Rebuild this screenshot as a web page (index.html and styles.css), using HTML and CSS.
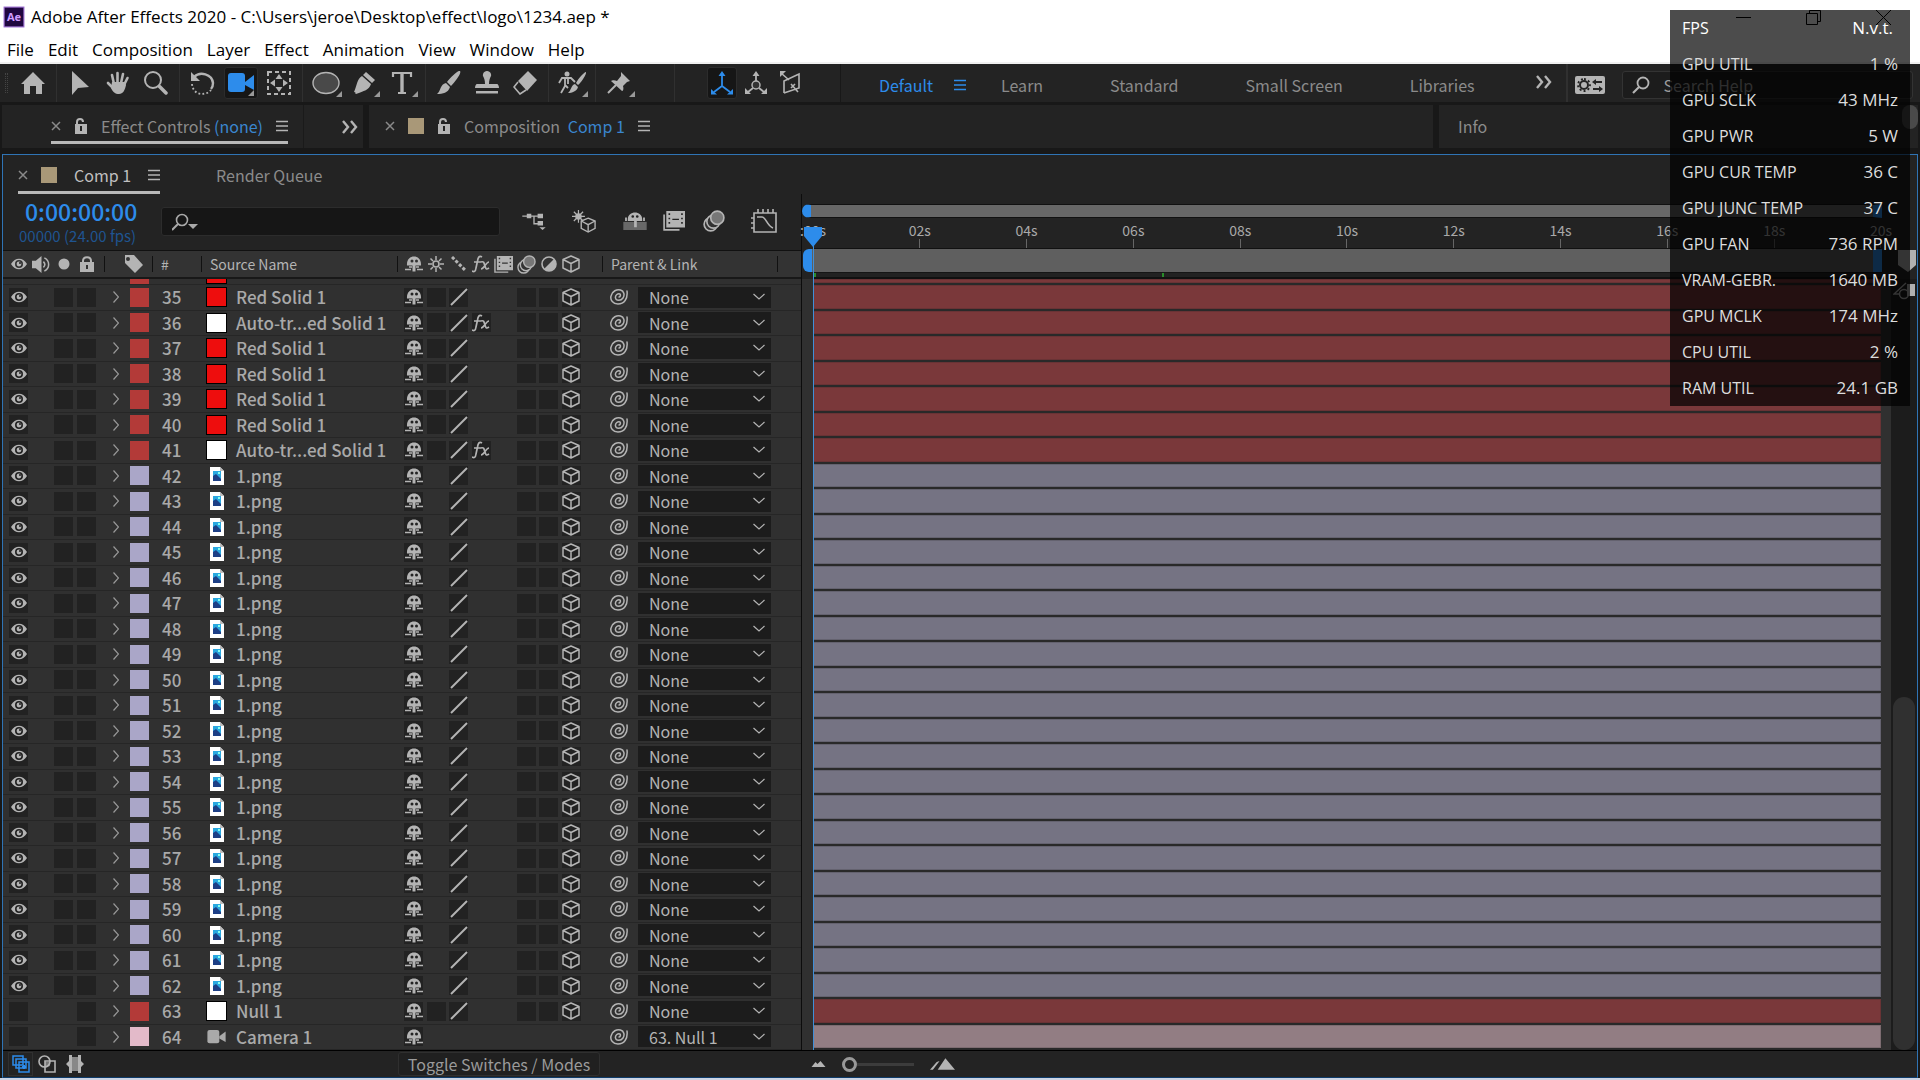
FILE: index.html
```html
<!DOCTYPE html>
<html lang="en">
<head>
<meta charset="utf-8">
<title>Adobe After Effects 2020</title>
<link rel="stylesheet" href="styles.css">
</head>
<body>
<svg class="sprite" aria-hidden="true">
  <symbol id="home" viewBox="0 0 24 24"><path fill="currentColor" d="M12 1 0 13h3v10h6v-8h6v8h6V13h3z"/></symbol>
  <symbol id="arrow" viewBox="0 0 24 24"><path fill="currentColor" d="M4 0v24l6-7 11-1z"/></symbol>
  <symbol id="hand" viewBox="0 0 24 24"><path fill="none" stroke="currentColor" stroke-width="2.6" stroke-linecap="round" d="M8 13 6 4M11.500 12V2M15 12l2-9M18 14l3.500-7M7 17l-5-5"/><path fill="currentColor" d="M6 11h13l1 3c-1 5-3 9-7 9-4 0-6-2-8-6z"/></symbol>
  <symbol id="zoom" viewBox="0 0 24 24"><path fill="none" stroke="currentColor" stroke-width="2" d="M17 9A8 8 0 1 1 1 9a8 8 0 0 1 16 0z"/><path stroke="currentColor" stroke-width="3.500" stroke-linecap="round" d="m15.500 15.500 6.500 6.500"/></symbol>
  <symbol id="rotate" viewBox="0 0 24 24"><path fill="none" stroke="currentColor" stroke-width="2.400" d="M3 6c6-6 18-3 19 6 0 3-1 5-2 6"/><path fill="currentColor" d="M0 1v9h9z"/><path fill="none" stroke="currentColor" stroke-width="1.800" stroke-dasharray="1.800 2.200" d="M1 13c1 12 14 12 19 6"/></symbol>
  <symbol id="camera" viewBox="0 0 26 20"><rect width="17" height="19" y="0" rx="3" fill="currentColor"/><path fill="currentColor" d="M17 9 26 2v15l-9-5z"/></symbol>
  <symbol id="pan" viewBox="0 0 24 24"><path fill="none" stroke="currentColor" stroke-width="2" stroke-dasharray="4 3" d="M1 1h22v22H1z"/><path fill="currentColor" d="m12 3 3.500 5h-7zM12 21l3.500-5h-7zM3 12l5-3.500v7zM21 12l-5-3.500v7z"/></symbol>
  <symbol id="ellipse" viewBox="0 0 28 24"><ellipse cx="14" cy="12" rx="13" ry="10.500" fill="#494949" stroke="currentColor" stroke-width="1.400"/></symbol>
  <symbol id="pen" viewBox="0 0 24 24"><path fill="currentColor" d="m14 1 9 8-3 3-9-8zM10 5l9 8c-2 6-7 7-15 10l-1-1 7-7a2 2 0 1 1 2 1l-6 6-4-1C5 14 5 8 10 5z"/></symbol>
  <symbol id="type" viewBox="0 0 24 24"><path fill="none" stroke="currentColor" stroke-width="2.200" d="M3 6V2h18v4M8 22h8"/><path fill="none" stroke="currentColor" stroke-width="3.400" d="M12 2v20"/></symbol>
  <symbol id="brush" viewBox="0 0 24 24"><path fill="currentColor" d="M23 0c2 2-5 11-9 15l-4-4C14 6 21-1 23 0zM9 12l4 4c-2 6-7 7-13 7 4-3 3-10 9-11z"/></symbol>
  <symbol id="stamp" viewBox="0 0 24 24"><path fill="currentColor" d="M12 0a4 4 0 0 1 4 5c-1 2-2 4-2 8h8c1 0 2 2 2 4H0c0-2 1-4 2-4h8c0-4-1-6-2-8a4 4 0 0 1 4-5zM1 20h22v2.500H1z"/></symbol>
  <symbol id="eraser" viewBox="0 0 24 24"><path fill="currentColor" d="M15 0 24 9 14 20 5 10z"/><path fill="none" stroke="currentColor" stroke-width="1.600" d="m5 11-4 5 6 7 6-4"/></symbol>
  <symbol id="roto" viewBox="0 0 28 24"><circle cx="9" cy="3" r="2.500" fill="currentColor"/><path fill="none" stroke="currentColor" stroke-width="1.800" d="M1 12l3-5h9l4 4M7 7v8l-4 7M7 14l3 3M10 7v6"/><path fill="currentColor" d="M28 1c1 1-4 10-8 13l-2-2C20 8 26 1 28 1zM17 13l3 3c-1 4-6 6-10 6 3-2 3-8 7-9z"/></symbol>
  <symbol id="pin" viewBox="0 0 24 24"><path fill="currentColor" d="m14 1 9 9-3 1-4 4c1 3 0 5-1 5L4 10c1-1 4-1 6 0l4-5z"/><path stroke="currentColor" stroke-width="2" d="m9 14-8 8"/></symbol>
  <symbol id="axis" viewBox="0 0 24 24"><path fill="none" stroke="currentColor" stroke-width="1.800" d="M12 4v11L4 21M12 15l8 6"/><path fill="currentColor" d="m12 0 3.500 5h-7zM1 18v5.500h6zM23 18v5.500h-6z"/></symbol>
  <symbol id="axisball" viewBox="0 0 24 24"><path fill="none" stroke="currentColor" stroke-width="1.800" d="M12 4v8M9 17l-5 4M15 17l5 4"/><path fill="currentColor" d="m12 0 3.500 5h-7zM1 17v6h6zM23 17v6h-6z"/><circle cx="12" cy="14" r="4" fill="#333" stroke="currentColor" stroke-width="1.500"/></symbol>
  <symbol id="axisview" viewBox="0 0 24 24"><path fill="none" stroke="currentColor" stroke-width="1.600" d="M6 22V10L21 3v14L6 22M3 2l8 7M13 13l7 8M13 17l4-4"/><path fill="currentColor" d="M2 0h6L2 6z"/></symbol>
  <symbol id="menu" viewBox="0 0 12 12"><path stroke="currentColor" stroke-width="1.500" d="M0 1.500h12M0 6h12M0 10.500h12"/></symbol>
  <symbol id="more" viewBox="0 0 16 14"><path fill="none" stroke="currentColor" stroke-width="2.400" d="m1 1 5 6-5 6M9 1l5 6-5 6"/></symbol>
  <symbol id="close" viewBox="0 0 10 10"><path stroke="currentColor" stroke-width="1.500" d="m1 1 8 8M9 1 1 9"/></symbol>
  <symbol id="unlock" viewBox="0 0 14 16"><path fill="none" stroke="currentColor" stroke-width="2" d="M3 7V4c0-4 6-4 6 0"/><path fill="currentColor" fill-rule="evenodd" d="M1 6h12v10H1zM6 8v5h2V8z"/></symbol>
  <symbol id="lock" viewBox="0 0 14 16"><path fill="none" stroke="currentColor" stroke-width="2" d="M3 7V5c0-5 8-5 8 0v2"/><path fill="currentColor" fill-rule="evenodd" d="M0 6h14v10H0zM6 9v4h2V9z"/></symbol>
  <symbol id="find" viewBox="0 0 18 18"><circle cx="11" cy="7" r="5.500" fill="none" stroke="currentColor" stroke-width="1.800"/><path stroke="currentColor" stroke-width="2.200" d="m7 11-6 6"/></symbol>
  <symbol id="findmenu" viewBox="0 0 26 18"><circle cx="10" cy="7" r="5.500" fill="none" stroke="currentColor" stroke-width="1.600"/><path stroke="currentColor" stroke-width="2" d="m6 11-6 6"/><path fill="currentColor" d="M16 11h10l-5 5z"/></symbol>
  <symbol id="sync" viewBox="0 0 30 18"><rect width="30" height="18" rx="2" fill="#b4b4b4"/><circle cx="9" cy="9" r="4" fill="none" stroke="#232323" stroke-width="2"/><path stroke="#232323" stroke-width="1.800" stroke-dasharray="2 2.200" fill="none" d="M9 3a6 6 0 1 1 0 12A6 6 0 0 1 9 3"/><path stroke="#232323" stroke-width="2" d="M20 6h7M18 13h7"/><path fill="#232323" d="m17 6 4-3v6zM28 13l-4-3v6z"/></symbol>
  <symbol id="eye" viewBox="0 0 18 12"><path fill="currentColor" fill-rule="evenodd" d="M1 6c4-7 12-7 16 0-4 7-12 7-16 0zm4 0a4 4 0 1 0 8 0 4 4 0 0 0-8 0z"/><circle cx="9" cy="6" r="2.400" fill="currentColor"/><circle cx="10" cy="5" r="1" fill="#222"/></symbol>
  <symbol id="speaker" viewBox="0 0 20 18"><path fill="currentColor" d="M0 5h4l6-5v18l-6-5H0z"/><path fill="none" stroke="currentColor" stroke-width="1.600" d="M12 6c2 2 2 4 0 6M13 2c6 3 6 11 0 14"/></symbol>
  <symbol id="dot" viewBox="0 0 12 12"><circle cx="6" cy="6" r="5.500" fill="currentColor"/></symbol>
  <symbol id="tag" viewBox="0 0 18 18"><path fill="currentColor" fill-rule="evenodd" d="M0 0h9l9 10-8 8L0 8zm3 2a2 2 0 1 0 2 2 2 2 0 0 0-2-2z"/></symbol>
  <symbol id="shy" viewBox="0 0 18 15"><path fill="currentColor" fill-rule="evenodd" d="M2 9C1-3 17-3 16 9h-5.500v6h-3V9zm3.500-4.500a1.500 1.500 0 1 0 3 0 1.500 1.500 0 0 0-3 0zm4.500 0a1.500 1.500 0 1 0 3 0 1.500 1.500 0 0 0-3 0z"/><path stroke="currentColor" stroke-width="1.600" d="M4 10.500h3M11 10.500h3M0 13h6M12 13h6"/></symbol>
  <symbol id="sun" viewBox="0 0 16 16"><circle cx="8" cy="8" r="3" fill="none" stroke="currentColor" stroke-width="1.600"/><path stroke="currentColor" stroke-width="1.500" d="M8 0v4M8 12v4M0 8h4M12 8h4M2.500 2.500l2.500 2.500M11 11l2.500 2.500M13.500 2.500 11 5M5 11l-2.500 2.500"/></symbol>
  <symbol id="steps" viewBox="0 0 16 16"><path stroke="currentColor" stroke-width="3" stroke-dasharray="3.200 1.800" d="m1 1 14 14"/></symbol>
  <symbol id="slash" viewBox="0 0 18 18"><path stroke="currentColor" stroke-width="2" d="M1 17 17 1"/></symbol>
  <symbol id="film" viewBox="0 0 20 18"><path fill="none" stroke="currentColor" stroke-width="1.500" d="M1 3v14h14"/><path fill="currentColor" fill-rule="evenodd" d="M3 0h17v15H3zm2 2v1.500h1.500V2zm0 4v1.500h1.500V6zm0 4v1.500h1.500V10zM16.500 2v1.500H18V2zm0 4v1.500H18V6zm0 4v1.500H18V10zM8.500 7v1.200h6V7z"/></symbol>
  <symbol id="blur" viewBox="0 0 20 20"><g fill="#333" stroke="currentColor" stroke-width="1.500"><circle cx="7" cy="13" r="6"/><circle cx="9.500" cy="10.500" r="6"/><circle cx="13" cy="7" r="6" fill="#777"/></g></symbol>
  <symbol id="half" viewBox="0 0 16 16"><circle cx="8" cy="8" r="7" fill="none" stroke="currentColor" stroke-width="1.600"/><path fill="currentColor" d="M13 3a7 7 0 0 1-10 10z"/></symbol>
  <symbol id="cube" viewBox="0 0 18 18"><path fill="none" stroke="currentColor" stroke-width="1.500" stroke-linejoin="round" d="m9 1 8 3.500v8.500l-8 4-8-4V4.500zM1 4.500l8 4 8-4M9 8.500V17"/></symbol>
  <symbol id="fx" viewBox="0 0 18 18"><path fill="none" stroke="currentColor" stroke-width="1.700" d="M10 2C7 0 6 3 5.500 6L4 13c-.5 4-2 4-4 3M2 7h7M9 7c3-1 3 1 4 4 1 3 1 4 4 2M17 7c-3 0-5 7-8 7"/></symbol>
  <symbol id="spiral" viewBox="0 0 18 18"><path fill="none" stroke="currentColor" stroke-width="1.500" stroke-linecap="round" d="M17 3c1 8-3 13-9 13C3 16 0 12 1 8c1-5 6-7 9.500-6C14 3 15 7 13 10c-2 3-7 3-7.500 0C5 7 8 5 10 6c1 1 0 3-1 3"/></symbol>
  <symbol id="right" viewBox="0 0 6 12"><path fill="none" stroke="currentColor" stroke-width="1.200" d="m.5.5 5 5.500-5 5.500"/></symbol>
  <symbol id="down" viewBox="0 0 12 8"><path fill="none" stroke="currentColor" stroke-width="1.200" d="m.5 1 5.500 5 5.500-5"/></symbol>
  <symbol id="image" viewBox="0 0 14 18"><path fill="#fff" d="M0 0h10l4 4v14H0z"/><path fill="#bbb" d="M10 0v4h4z"/><path fill="#29a8e0" d="M3 4h8v10H3z"/><path fill="#1d3f86" d="m3 9 3-2 5 5v2H3z"/><path fill="#8fe" d="M8 5h2v2H8z"/></symbol>
  <symbol id="flow" viewBox="0 0 26 20"><path fill="currentColor" d="M5 2h5v5H5zM17 2h6v5h-6zM17 10h6v5h-6zM19 17h7l-3.500 3z"/><path fill="none" stroke="currentColor" stroke-width="1.500" d="M0 4.500h18M13 4v9h5"/></symbol>
  <symbol id="draft" viewBox="0 0 26 26"><circle cx="7" cy="8" r="3.500" fill="currentColor"/><path stroke="currentColor" stroke-width="1.300" d="M7 1v14M0 8h14M2 3l10 10M12 3 2 13"/><path fill="#232323" stroke="currentColor" stroke-width="1.500" d="m17.500 10 7.500 3v8l-7.500 4-7.500-4v-8z"/><path fill="none" stroke="currentColor" stroke-width="1.500" d="m10 13 7.500 4 7.500-4M17.500 17v8"/></symbol>
  <symbol id="hide" viewBox="0 0 26 20"><path fill="#686868" d="M0 11h26v9H0z"/><path fill="currentColor" fill-rule="evenodd" d="M5 8c0-10 16-10 16 0v2h-6v7h-3v-7H5zm4-3a1.500 1.500 0 1 0 3 0 1.500 1.500 0 0 0-3 0zm5 0a1.500 1.500 0 1 0 3 0 1.500 1.500 0 0 0-3 0zM2 6h2v4H2zM22 6h2v4h-2z"/></symbol>
  <symbol id="graph" viewBox="0 0 26 24"><path fill="none" stroke="currentColor" stroke-width="1.600" d="M3 4h22v19H3zM7 0v4M12 0v4M17 0v4M22 0v4M0 9h3M0 14h3M0 19h3M6 8h5c4 0 5 9 11 11"/></symbol>
  <symbol id="layersicon" viewBox="0 0 18 18"><path fill="#232323" stroke="currentColor" stroke-width="1.500" d="M1 1h10v9H1zM4 4h10v9H4zM7 7h10v10H7z"/><path fill="currentColor" d="M11 10h2v4h-2zM10 11h4v2h-4z"/></symbol>
  <symbol id="modes" viewBox="0 0 18 18"><path fill="#777" d="M7 7h5v4l-3 1H7z"/><path fill="none" stroke="currentColor" stroke-width="1.600" d="M7 6h10v11H7z"/><circle cx="6.500" cy="6.500" r="5.500" fill="none" stroke="currentColor" stroke-width="1.600"/></symbol>
  <symbol id="braces" viewBox="0 0 18 18"><path fill="#888" d="M4 2h10v14H4z"/><path fill="currentColor" d="M6 0v18H3v-6L0 9l3-3V0zM12 0v18h3v-6l3-3-3-3V0z"/></symbol>
  <symbol id="hills" viewBox="0 0 14 6"><path fill="currentColor" d="m0 6 4-5 2 2 3-3 5 6z"/></symbol>
  <symbol id="peaks" viewBox="0 0 26 12"><path fill="currentColor" d="m8 12 8-12 10 12zM0 12l7-8 3-1-7 9z"/></symbol>
  <symbol id="marker" viewBox="0 0 18 22"><path fill="#b0b0b0" d="M0 0h18v15l-8 7L0 15z"/></symbol>
  <symbol id="bin" viewBox="0 0 22 18"><path fill="#b0b0b0" d="M14 2h8v12h-8z"/><path fill="none" stroke="#b0b0b0" stroke-width="1.500" d="M13 1 1 12h6"/><circle cx="11" cy="12" r="4.500" fill="none" stroke="#b0b0b0" stroke-width="1.500"/></symbol>
</svg>

<header class="titlebar">
  <svg class="logo" viewBox="0 0 20 20" aria-hidden="true"><rect x="1" y="1" width="18" height="18" fill="#1f0740" stroke="#9a6bd0"/><text x="10" y="14" text-anchor="middle" class="logo-text">Ae</text></svg>
  <h1 class="title">Adobe After Effects 2020 - C:\Users\jeroe\Desktop\effect\logo\1234.aep *</h1>
  <div class="window-controls">
    <button aria-label="Minimize"><svg width="15" height="15" viewBox="0 0 15 15"><path stroke="#000" d="M0 7.500h15"/></svg></button>
    <button aria-label="Restore"><svg width="15" height="15" viewBox="0 0 15 15"><path fill="none" stroke="#000" d="M.5 3.500h11v11H.5zM3.500 3V.5h11v11H12"/></svg></button>
    <button aria-label="Close"><svg width="15" height="15" viewBox="0 0 15 15"><path stroke="#000" d="m0 0 15 15M15 0 0 15"/></svg></button>
  </div>
</header>

<nav class="menubar">
  <button>File</button><button>Edit</button><button>Composition</button><button>Layer</button><button>Effect</button><button>Animation</button><button>View</button><button>Window</button><button>Help</button>
</nav>

<div class="toolbar">
  <div class="grip"></div>
  <div class="tools"><button aria-label="Home"><svg class="i24"><use href="#home"/></svg></button></div>
  <div class="tools"><button aria-label="Selection"><svg class="i24"><use href="#arrow"/></svg></button><button aria-label="Hand"><svg class="i24"><use href="#hand"/></svg></button><button aria-label="Zoom"><svg class="i24"><use href="#zoom"/></svg></button></div>
  <div class="tools"><button aria-label="Rotate"><svg class="i24"><use href="#rotate"/></svg></button><button class="active flyout" aria-label="Camera"><svg class="i26"><use href="#camera"/></svg></button><button aria-label="Pan behind"><svg class="i24"><use href="#pan"/></svg></button></div>
  <div class="tools"><button class="flyout" aria-label="Ellipse"><svg class="i28"><use href="#ellipse"/></svg></button><button class="flyout" aria-label="Pen"><svg class="i24"><use href="#pen"/></svg></button><button class="flyout" aria-label="Type"><svg class="i24"><use href="#type"/></svg></button></div>
  <div class="tools"><button aria-label="Brush"><svg class="i24"><use href="#brush"/></svg></button><button aria-label="Clone stamp"><svg class="i24"><use href="#stamp"/></svg></button><button aria-label="Eraser"><svg class="i24"><use href="#eraser"/></svg></button></div>
  <div class="tools"><button class="flyout" aria-label="Roto brush"><svg class="i28"><use href="#roto"/></svg></button></div>
  <div class="tools pins"><button class="flyout" aria-label="Puppet pin"><svg class="i24"><use href="#pin"/></svg></button></div>
  <div class="tools axes"><button class="active" aria-label="Local axis"><svg class="i24"><use href="#axis"/></svg></button><button aria-label="World axis"><svg class="i24"><use href="#axisball"/></svg></button><button aria-label="View axis"><svg class="i24"><use href="#axisview"/></svg></button></div>
  <nav class="workspaces">
    <a class="current" href="#">Default <svg class="i12"><use href="#menu"/></svg></a><a href="#">Learn</a><a href="#">Standard</a><a href="#">Small Screen</a><a href="#">Libraries</a>
    <button class="more" aria-label="More workspaces"><svg class="i16"><use href="#more"/></svg></button>
  </nav>
  <div class="help">
    <button aria-label="Sync settings"><svg class="i30"><use href="#sync"/></svg></button>
    <label class="help-search"><svg class="i18"><use href="#find"/></svg><input type="text" placeholder="Search Help" aria-label="Search Help"></label>
  </div>
</div>

<div class="docks">
  <section class="dock effects">
    <div class="tab underlined"><svg class="i10"><use href="#close"/></svg><svg class="lock16"><use href="#unlock"/></svg><span>Effect Controls <b>(none)</b></span><svg class="i12"><use href="#menu"/></svg></div>
    <button class="more" aria-label="More panels"><svg class="i16"><use href="#more"/></svg></button>
  </section>
  <section class="dock viewer">
    <div class="tab"><svg class="i10"><use href="#close"/></svg><i class="swatch"></i><svg class="lock16"><use href="#unlock"/></svg><span>Composition <b>Comp 1</b></span><svg class="i12"><use href="#menu"/></svg></div>
  </section>
  <section class="dock info"><div class="tab">Info</div><i class="mini-scroll"></i></section>
</div>

<main class="timeline">
  <div class="tabs">
    <div class="tab underlined current"><svg class="i10"><use href="#close"/></svg><i class="swatch"></i><span>Comp 1</span><svg class="i12"><use href="#menu"/></svg></div>
    <div class="tab">Render Queue</div>
  </div>

  <div class="panes">
    <section class="left">
      <div class="controls">
        <div class="time"><strong>0:00:00:00</strong><small>00000 (24.00 fps)</small></div>
        <label class="layer-search"><svg class="i26s"><use href="#findmenu"/></svg><input type="text" aria-label="Search layers"></label>
        <div class="switches">
          <button aria-label="Mini-flowchart"><svg class="i26s"><use href="#flow"/></svg></button>
          <button aria-label="Draft 3D"><svg class="i26"><use href="#draft"/></svg></button>
          <button aria-label="Hide shy layers"><svg class="i26s"><use href="#hide"/></svg></button>
          <button aria-label="Frame blending"><svg class="i22"><use href="#film"/></svg></button>
          <button aria-label="Motion blur"><svg class="i22"><use href="#blur"/></svg></button>
          <button aria-label="Graph editor"><svg class="i26"><use href="#graph"/></svg></button>
        </div>
      </div>
      <table class="layers">
        <thead>
          <tr>
            <th><svg class="i18e"><use href="#eye"/></svg></th>
            <th><svg class="i19"><use href="#speaker"/></svg></th>
            <th><svg class="i12"><use href="#dot"/></svg></th>
            <th><svg class="i16"><use href="#lock"/></svg></th>
            <th></th>
            <th class="ruled tags"><svg class="i18"><use href="#tag"/></svg></th>
            <th class="ruled">#</th>
            <th class="ruled source">Source Name</th>
            <th><svg class="i18"><use href="#shy"/></svg></th>
            <th><svg class="i16"><use href="#sun"/></svg></th>
            <th><svg class="i16"><use href="#steps"/></svg></th>
            <th><svg class="i18"><use href="#fx"/></svg></th>
            <th><svg class="i19"><use href="#film"/></svg></th>
            <th><svg class="i19"><use href="#blur"/></svg></th>
            <th><svg class="i16"><use href="#half"/></svg></th>
            <th><svg class="i18"><use href="#cube"/></svg></th>
            <th></th>
            <th class="ruled parent">Parent &amp; Link</th>
          </tr>
        </thead>
        <tbody id="layers"></tbody>
      </table>
    </section>

    <section class="right">
      <div class="scale">
        <div class="navigator"></div>
        <div class="ruler" id="ruler"></div>
        <div class="workarea"></div>
        <div class="cache"><i></i></div>
      </div>
      <div class="side-tools"><svg class="marker"><use href="#marker"/></svg><svg class="bin"><use href="#bin"/></svg></div>
      <div class="bars" id="bars"></div>
      <div class="scroll"><i></i></div>
      <div class="playhead"><svg width="18" height="20" viewBox="0 0 18 20"><path fill="#2d8ceb" d="M0 0h18v9l-9 11L0 9z"/></svg></div>
    </section>
  </div>

  <footer class="status">
    <button class="framed" aria-label="Layer switches"><svg class="i18"><use href="#layersicon"/></svg></button>
    <button aria-label="Transfer controls"><svg class="i18"><use href="#modes"/></svg></button>
    <button aria-label="In and out"><svg class="i18"><use href="#braces"/></svg></button>
    <button class="toggle">Toggle Switches / Modes</button>
    <div class="zoomer"><svg class="hills"><use href="#hills"/></svg><input type="range" min="0" max="100" value="0" aria-label="Timeline zoom"><svg class="peaks"><use href="#peaks"/></svg></div>
  </footer>
</main>

<aside class="monitor">
  <dl>
    <div class="first"><dt>FPS</dt><dd>N.v.t.</dd></div>
    <div><dt>GPU UTIL</dt><dd>1 %</dd></div>
    <div><dt>GPU SCLK</dt><dd>43 MHz</dd></div>
    <div><dt>GPU PWR</dt><dd>5 W</dd></div>
    <div><dt>GPU CUR TEMP</dt><dd>36 C</dd></div>
    <div><dt>GPU JUNC TEMP</dt><dd>37 C</dd></div>
    <div><dt>GPU FAN</dt><dd>736 RPM</dd></div>
    <div><dt>VRAM-GEBR.</dt><dd>1640 MB</dd></div>
    <div><dt>GPU MCLK</dt><dd>174 MHz</dd></div>
    <div><dt>CPU UTIL</dt><dd>2 %</dd></div>
    <div><dt>RAM UTIL</dt><dd>24.1 GB</dd></div>
  </dl>
</aside>
<script src="app.js"></script>
</body>
</html>
```

FILE: styles.css
```css
* { box-sizing: border-box; }

body {
  margin: 0;
  height: 100vh;
  min-height: 600px;
  display: flex;
  flex-direction: column;
  overflow: hidden;
  background: #181818;
  color: #a9a9a9;
  font: 16px/20px "Noto Sans CJK SC", "Noto Sans", sans-serif;
}
body::after { content: ""; flex: none; height: 2px; background: #ccd4e4; }

button {
  margin: 0;
  padding: 0;
  border: 0;
  background: none;
  color: inherit;
  font: inherit;
  display: flex;
  align-items: center;
  justify-content: center;
}

input, select { font: inherit; color: inherit; }
a { color: inherit; text-decoration: none; }
svg { display: block; flex: none; }
.sprite { position: absolute; width: 0; height: 0; }

.i10 { width: 10px; height: 10px; }
.i12 { width: 12px; height: 12px; }
.i16 { width: 16px; height: 16px; }
.i18 { width: 18px; height: 18px; }
.i18e { width: 18px; height: 12px; }
.i19 { width: 19px; height: 19px; }
.i22 { width: 22px; height: 22px; }
.i24 { width: 24px; height: 24px; }
.i26 { width: 26px; height: 24px; }
.i26s { width: 26px; height: 18px; }
.i28 { width: 28px; height: 24px; }
.i30 { width: 30px; height: 18px; }
.lock16 { width: 14px; height: 16px; }

/* Window frame */
.titlebar {
  height: 34px;
  flex: none;
  display: flex;
  align-items: center;
  padding-left: 3px;
  background: #fff;
  color: #000;
}
.logo { width: 22px; height: 22px; margin-right: 6px; }
.logo-text { font: bold 10px "Noto Sans", sans-serif; fill: #cf9cff; }
.title { margin: 0; font: 17px/24px "Open Sans", sans-serif; }
.window-controls {
  position: relative;
  z-index: 3;
  margin-left: auto;
  padding-right: 2px;
  display: flex;
}
.window-controls button { width: 70px; height: 32px; }

.menubar {
  height: 30px;
  flex: none;
  display: flex;
  align-items: center;
  gap: 14px;
  padding: 3px 0 0 7px;
  background: #fff;
  border-bottom: 2px solid #f0f0f0;
  color: #000;
  font: 17px/24px "Open Sans", sans-serif;
}

/* Tools */
.toolbar {
  height: 38px;
  flex: none;
  display: flex;
  background: #232323;
  color: #b4b4b4;
}
.grip { width: 3px; height: 20px; margin: 9px 2px 0 5px; border: dotted #444; border-width: 0 1px; }
.tools { display: flex; align-items: center; padding: 0 4px; border-right: 1px solid #303030; }
.tools button { position: relative; width: 38px; height: 32px; }
.tools .active {
  width: 34px;
  margin: 0 2px;
  background: #161616;
  border: 1px solid #2c2c2c;
  border-radius: 3px;
  color: #2d8ceb;
}
.flyout::after {
  content: "";
  position: absolute;
  right: 3px;
  bottom: 2px;
  border: 3px solid #999;
  border-top-color: transparent;
  border-left-color: transparent;
}
.pins { padding-right: 36px; }
.axes { padding: 0 33px 0 30px; border-color: #181818; }
.axes button { width: 34px; }
.axes .active { width: 30px; }
.workspaces {
  display: flex;
  align-items: center;
  gap: 67px;
  padding: 4px 14px 0 38px;
  border-right: 2px solid #303030;
  color: #8b8b8b;
}
.workspaces a { display: flex; align-items: center; white-space: nowrap; }
.workspaces .current { gap: 21px; margin-right: -32px; color: #2d8ceb; }
.more { color: #b4b4b4; }
.workspaces .more { margin: 0 0 6px -6px; }
.help { flex: 1; display: flex; align-items: center; gap: 17px; padding: 4px 7px 0; }
.help-search {
  flex: 1;
  height: 28px;
  display: flex;
  align-items: center;
  gap: 14px;
  padding-left: 9px;
  background: #1c1c1c;
  border: 1px solid #333;
  border-radius: 3px;
}
.help-search input, .layer-search input {
  flex: 1;
  min-width: 0;
  padding: 0;
  border: 0;
  outline: 0;
  background: none;
}
.help-search input::placeholder { color: #9b9b9b; opacity: 1; }

/* Upper docked panels */
.docks {
  flex: none;
  height: 52px;
  display: grid;
  grid-template-columns: 361px 1fr 479px;
  gap: 6px;
  padding: 3px 2px 6px;
}
.dock { display: flex; align-items: stretch; background: #232323; color: #8b8b8b; }
.tab { display: flex; align-items: center; white-space: nowrap; border-bottom: 3px solid transparent; }
.tab.underlined { border-color: #b8b8b8; }
.tab b { font-weight: 400; color: #3a86cf; }
.tab svg { color: #b4b4b4; }
.tab .i10 { color: #8a8a8a; }
.swatch { width: 16px; height: 16px; background: #a99878; }
.dock .tab { height: 39px; padding-top: 5px; }
.effects { justify-content: space-between; }
.effects .tab { margin-left: 49px; gap: 13px; }
.effects .more { width: 60px; padding-left: 32px; border-left: 1px solid #1a1a1a; }
.viewer .tab { margin-left: 16px; gap: 13px; }
.viewer b { margin-left: 4px; }
.info .tab { margin-left: 19px; }
.mini-scroll { width: 16px; height: 24px; margin-left: auto; border-radius: 8px; background: #4a4a4a; }

/* Timeline panel */
.timeline {
  flex: 1;
  min-height: 0;
  display: flex;
  flex-direction: column;
  margin: 0 2px;
  border: 1px solid #2f74b5;
  border-bottom-color: #0d3a68;
  background: #232323;
}
.tabs { flex: none; height: 39px; display: flex; gap: 56px; padding: 4px 15px 0; color: #8b8b8b; }
.tabs .current { color: #c0c0c0; gap: 17px; }
.tabs .current .i10 { margin-right: -4px; }
.panes { flex: 1; min-height: 0; display: grid; grid-template-columns: 799px 1fr; }
.left { min-height: 0; display: flex; flex-direction: column; border-right: 1px solid #0c0c0c; }
.controls { flex: none; height: 56px; display: flex; align-items: flex-start; padding: 6px 0 0 16px; }
.time { width: 142px; display: flex; flex-direction: column; gap: 4px; color: #2d8ceb; }
.time strong { padding-left: 6px; font-size: 23px; line-height: 22px; font-weight: 500; }
.time small { font-size: 15px; line-height: 20px; color: #1f5490; }
.layer-search {
  width: 339px;
  height: 29px;
  margin-top: 7px;
  display: flex;
  align-items: center;
  padding-left: 10px;
  background: #161616;
  border: 1px solid #2c2c2c;
  border-radius: 3px;
}
.switches { display: grid; grid-template-columns: 52px 48px 54px 24px 56px 44px; margin: 8px 0 0 8px; color: #b4b4b4; }
.switches button { height: 26px; }

.layers { flex: 1; min-height: 0; display: flex; flex-direction: column; overflow: hidden; }
.layers tr {
  display: grid;
  grid-template-columns: 23px 22px 23px 23px 23px 37px 42px 202px 23px 22px 23px 22px 23px 22px 23px 22px 56px 1fr;
  padding-left: 4px;
}
.layers thead tr {
  grid-template-columns: 23px 22px 23px 23px 6px 48px 49px 201px 23px 22px 23px 22px 23px 22px 23px 22px 20px 176px;
  height: 29px;
  background: #333;
  border-top: 1px solid #111;
  border-bottom: 2px solid #181818;
}
.layers th {
  padding: 0;
  display: flex;
  align-items: center;
  justify-content: center;
  font-weight: 400;
  font-size: 14px;
  color: #b4b4b4;
}
.layers th.ruled { justify-content: flex-start; }
.ruled::before, .source::after, .parent::after { content: ""; width: 1px; height: 16px; background: #111; }
.ruled::before { margin-right: 8px; }
.tags::before { margin-right: 20px; }
.source::after, .parent::after { margin-left: auto; }
.source::after { margin-right: 4px; }
.layers tbody { flex: 1; min-height: 0; display: flex; flex-direction: column; background: #303030; }
.layers tbody tr { flex: 1 1 0; min-height: 0; border-bottom: 1px solid #262626; overflow: hidden; }
.layers tbody tr.clipped { flex: 0 0 6px; align-items: end; }
.layers td { min-width: 0; min-height: 0; padding: 0; display: flex; align-items: center; justify-content: center; color: #b4b4b4; }
.cell { width: 19px; height: 19px; background: #222; overflow: hidden; }
.layers td.twirl { justify-content: flex-end; color: #999; }
.twirl svg { width: 6px; height: 12px; margin-right: 2px; }
.label { width: 19px; height: 19px; }
.label.red { background: #b33a38; }
.label.lavender { background: #aaa6c8; }
.label.pink { background: #e3bac9; }
.layers td.number, .layers td.name { justify-content: flex-start; font-size: 17px; font-weight: 500; color: #a9a9a9; }
.layers td.number { padding-left: 4px; }
.layers td.name { gap: 9px; padding-left: 6px; white-space: nowrap; }
.thumb { width: 21px; height: 20px; flex: none; display: flex; align-items: center; justify-content: center; }
.thumb svg { width: 14px; height: 18px; }
.thumb .cam { width: 19px; height: 14px; }
.thumb.solid { border: 1px solid #000; background: #ee0d0d; }
.thumb.white { border: 1px solid #000; background: #fff; }
.layers td.pick { padding-left: 18px; }
.layers td.link { justify-content: flex-start; }
.drop { display: grid; width: 133px; height: 21px; background: #1c1c1c; align-items: center; }
.drop select {
  grid-area: 1 / 1;
  width: 100%;
  height: 21px;
  padding: 0 0 0 11px;
  border: 0;
  appearance: none;
  background: none;
  line-height: 20px;
}
.drop svg { grid-area: 1 / 1; width: 12px; height: 8px; margin-left: 115px; pointer-events: none; }

/* Time graph */
.right {
  position: relative;
  min-height: 0;
  display: grid;
  grid-template-columns: 1fr 25px;
  grid-template-rows: 85px 1fr;
}
.scale { display: flex; flex-direction: column; padding: 10px 10px 0 0; min-width: 0; }
.navigator, .workarea { border: solid #2d8ceb; border-width: 0 9px; background: #676767; flex: none; }
.navigator { height: 14px; border-radius: 7px 0 0 7px; border-top: 1px solid #111; border-bottom: 1px solid #111; }
.ruler { flex: none; height: 31px; display: flex; justify-content: space-between; margin: 0 1px 0 11px; padding-top: 3px; border-bottom: 1px solid #111; }
.tick { width: 0; display: flex; flex-direction: column; align-items: center; justify-content: space-between; font-size: 14px; line-height: 18px; white-space: nowrap; }
.tick::after { content: ""; width: 1px; height: 9px; background: #666; }
.workarea { height: 23px; background: #5f5f5f; border-radius: 6px 0 0 6px; margin-left: 1px; }
.cache { height: 7px; background: #222; margin-left: 11px; border-top: 1px solid #161616; border-bottom: 2px solid #111; display: flex; }
.cache::before, .cache i { content: ""; width: 3px; height: 4px; background: #2a8c2a; }
.cache i { width: 2px; margin-left: 346px; }
.side-tools { padding: 56px 0 0 1px; display: flex; flex-direction: column; gap: 10px; z-index: 1; height: 108px; }
.marker { width: 18px; height: 22px; margin-left: 5px; }
.bin { width: 22px; height: 18px; }
.bars { min-height: 0; display: flex; flex-direction: column; padding: 0 10px 0 11px; background: #303030; border-right: 1px solid #1c1c1c; }
.bar { flex: 1 1 0; min-height: 0; border: solid #292929; border-width: 0 0 2px; }
.bar.clipped { flex: 0 0 6px; }
.bar i { display: block; height: 100%; border: 1px solid; border-width: 1px 1px 1px 0; }
.bar .red { background: #7a383a; border-color: #693335; }
.bar .lavender { background: #757383; border-color: #64626f; }
.bar .pink { background: #927d83; border-color: #7d6c71; }
.scroll { background: #1c1c1c; padding: 418px 2px 0 1px; min-height: 0; display: flex; }
.scroll i { flex: 1; border-radius: 11px; background: #303030; }
.playhead {
  position: absolute;
  left: 2px;
  top: 33px;
  bottom: 0;
  width: 18px;
  background: linear-gradient(#3f8fd8, #3f8fd8) 9px 0 / 1px 100% no-repeat;
}

/* Panel footer */
.status { flex: none; height: 27px; display: flex; align-items: center; border-top: 1px solid #000; padding-left: 5px; color: #b4b4b4; }
.status button { width: 28px; height: 24px; }
.status .framed { width: 25px; border: 1px solid #303030; color: #2d8ceb; }
.status .toggle { width: 202px; margin-left: 309px; border: 1px solid #2f2f2f; border-radius: 3px; color: #9b9b9b; background: #202020; }
.zoomer { margin-left: 211px; display: flex; align-items: center; gap: 16px; }
.hills { width: 15px; height: 6px; }
.peaks { width: 25px; height: 12px; }
.zoomer input { width: 72px; height: 16px; margin: 0; appearance: none; background: linear-gradient(#3c3c3c, #3c3c3c) 15px 7px / 100% 3px no-repeat; }
.zoomer input::-webkit-slider-thumb { appearance: none; width: 15px; height: 15px; border: 3px solid #999; border-radius: 50%; background: #232323; }

/* Hardware overlay */
.monitor {
  position: absolute;
  z-index: 2;
  top: 10px;
  right: 10px;
  width: 240px;
  background: rgba(0, 0, 0, .7);
  color: #ddd;
  font: 16px/36px "Open Sans", sans-serif;
}
.monitor dl { margin: 0; }
.monitor dl div { display: flex; justify-content: space-between; padding: 0 12px; }
.monitor .first { color: #fff; padding-right: 17px; }
.monitor dd { margin: 0; font-size: 17px; }
```

FILE: app.js
```js
const icon = (name, cls = 'i18') => `<svg class="${cls}"><use href="#${name}"/></svg>`;
const cell = (name, cls) => `<button class="cell">${name ? icon(name, cls) : ''}</button>`;

// Layers 34 to 64, top to bottom; the first one is scrolled mostly out of view.
const layers = [];
for (let n = 34; n <= 64; n++) {
  const solid = n <= 41;
  const auto = n === 36 || n === 41;
  layers.push({
    n,
    visible: n < 63,
    label: solid || n === 63 ? 'red' : n === 64 ? 'pink' : 'lavender',
    name: auto ? 'Auto-tr...ed Solid 1' : solid ? 'Red Solid 1' : n === 63 ? 'Null 1' : n === 64 ? 'Camera 1' : '1.png',
    thumb: auto || n === 63 ? 'white' : solid ? 'solid' : n === 64 ? 'cam' : 'image',
    collapse: solid || n === 63,
    fx: auto,
    camera: n === 64,
    parent: n === 64 ? '63. Null 1' : 'None'
  });
}

const thumb = kind =>
  kind === 'image' ? `<span class="thumb">${icon('image')}</span>` :
  kind === 'cam' ? `<span class="thumb">${icon('camera', 'cam')}</span>` :
  `<span class="thumb ${kind}"></span>`;

const row = l => l.n === 34
  ? `<tr class="clipped"><td></td><td></td><td></td><td></td><td></td><td><span class="label red"></span></td><td></td><td class="name"><span class="thumb solid"></span></td></tr>`
  : `<tr>
  <td>${cell(l.visible && 'eye', 'i18e')}</td>
  <td></td>
  <td>${l.visible ? cell() : ''}</td>
  <td>${cell()}</td>
  <td class="twirl">${icon('right', '')}</td>
  <td><span class="label ${l.label}"></span></td>
  <td class="number">${l.n}</td>
  <td class="name">${thumb(l.thumb)}${l.name}</td>
  <td>${cell('shy')}</td>
  <td>${l.collapse ? cell() : ''}</td>
  <td>${l.camera ? '' : cell('slash')}</td>
  <td>${l.fx ? cell('fx') : ''}</td>
  <td></td>
  <td>${l.camera ? '' : cell()}</td>
  <td>${l.camera ? '' : cell()}</td>
  <td>${l.camera ? '' : cell('cube')}</td>
  <td class="pick">${icon('spiral')}</td>
  <td class="link"><span class="drop"><select aria-label="Parent of layer ${l.n}"><option>${l.parent}</option></select>${icon('down', '')}</span></td>
</tr>`;

document.getElementById('layers').innerHTML = layers.map(row).join('');
document.getElementById('bars').innerHTML = layers
  .map(l => `<div class="bar${l.n === 34 ? ' clipped' : ''}"><i class="${l.label}"></i></div>`).join('');

const ticks = [':00s'];
for (let s = 2; s <= 20; s += 2) ticks.push(String(s).padStart(2, '0') + 's');
document.getElementById('ruler').innerHTML = ticks.map(t => `<span class="tick">${t}</span>`).join('');
```
